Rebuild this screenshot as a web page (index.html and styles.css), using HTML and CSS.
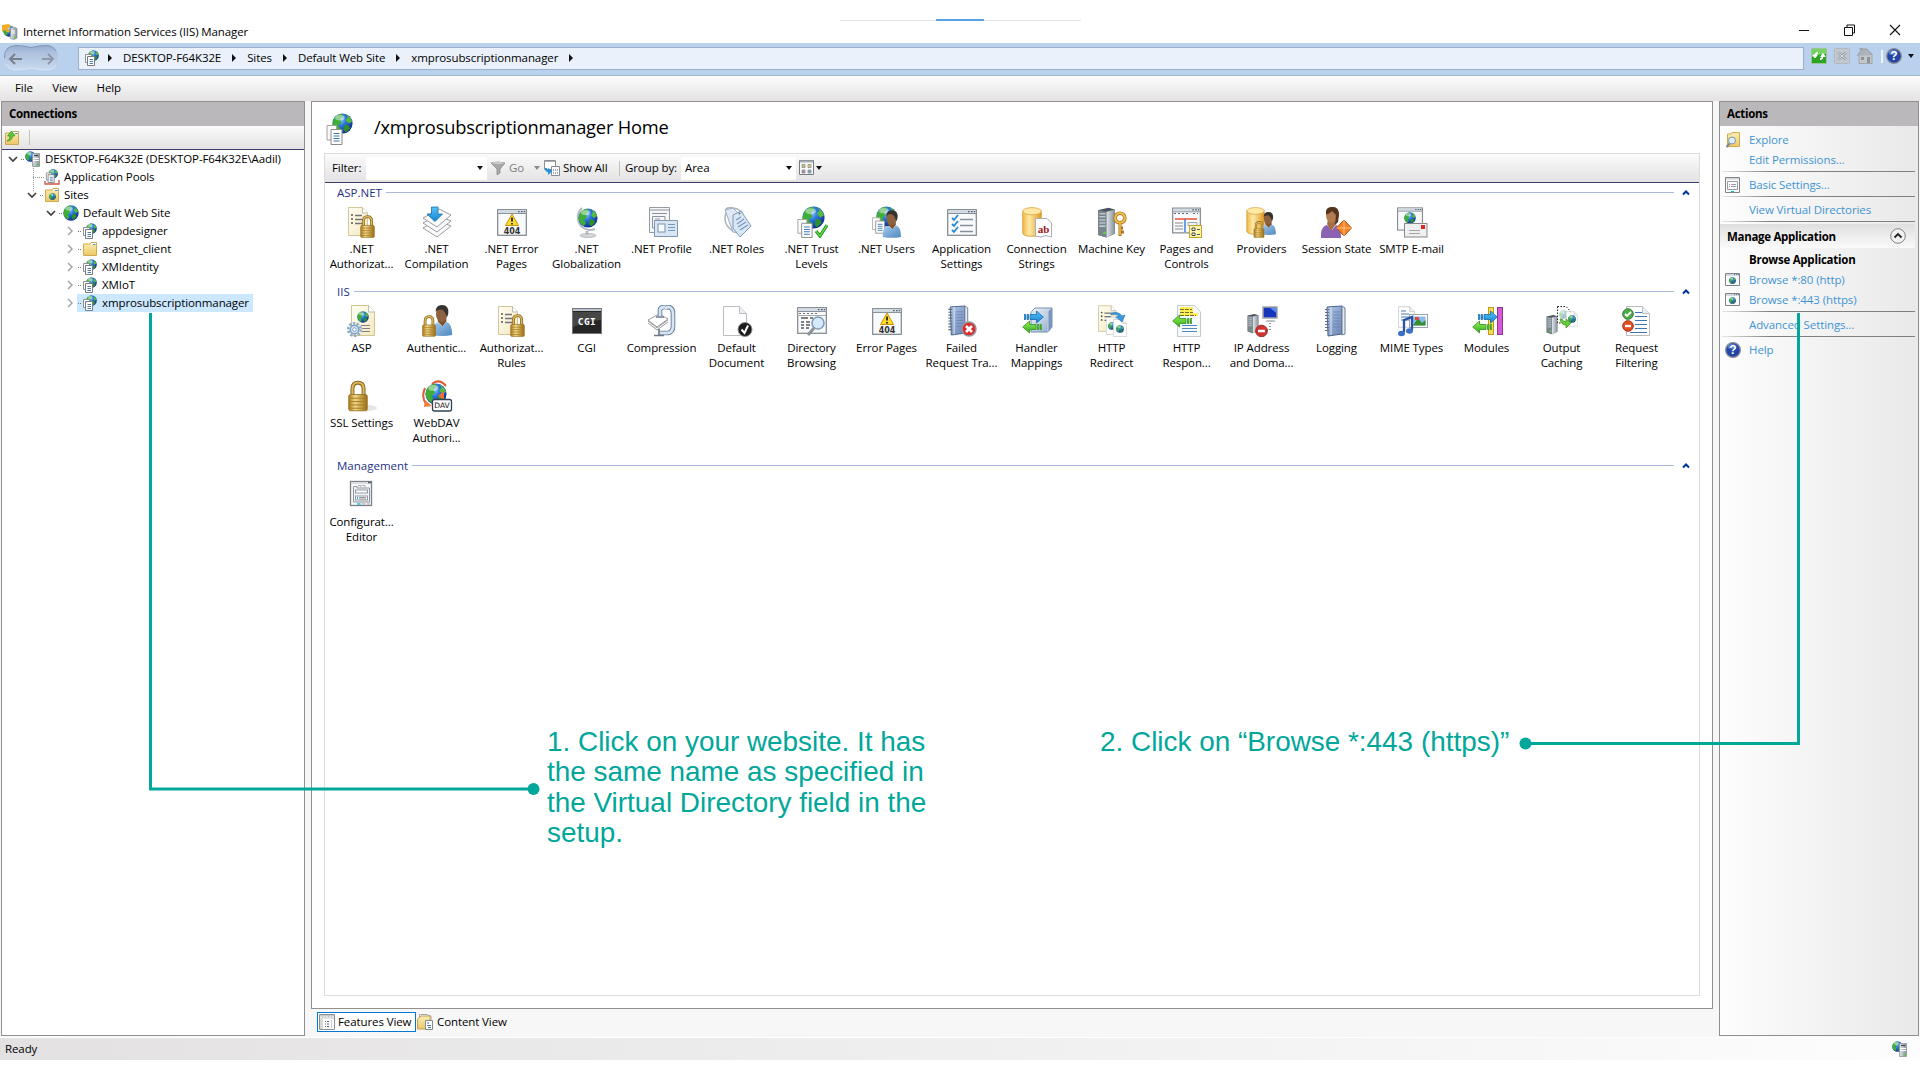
FILE: index.html
```html
<!DOCTYPE html>
<html lang="en">
<head>
<meta charset="utf-8">
<title>Internet Information Services (IIS) Manager</title>
<link rel="stylesheet" href="styles.css">
</head>
<body>
<svg class="sprite" width="0" height="0" aria-hidden="true">
<defs>
<radialGradient id="gBlue" cx=".38" cy=".3" r=".75"><stop offset="0" stop-color="#9fd4ff"/><stop offset=".4" stop-color="#2c78dc"/><stop offset="1" stop-color="#0b2a86"/></radialGradient>
<linearGradient id="gGold" x1="0" x2="1" y1="0" y2="0"><stop offset="0" stop-color="#a97a1d"/><stop offset=".35" stop-color="#f3d98a"/><stop offset="1" stop-color="#9a6c12"/></linearGradient>
<linearGradient id="gDb" x1="0" x2="1" y1="0" y2="0"><stop offset="0" stop-color="#f2b544"/><stop offset=".35" stop-color="#ffeaa8"/><stop offset="1" stop-color="#e09a20"/></linearGradient>
<linearGradient id="gFolder" x1="0" x2="0" y1="0" y2="1"><stop offset="0" stop-color="#fdeeb6"/><stop offset="1" stop-color="#ecc765"/></linearGradient>
<linearGradient id="gServer" x1="0" x2="1" y1="0" y2="0"><stop offset="0" stop-color="#e2e6ea"/><stop offset="1" stop-color="#85909a"/></linearGradient>
<linearGradient id="gPage" x1="0" x2="1" y1="0" y2="1"><stop offset="0" stop-color="#fffef4"/><stop offset="1" stop-color="#f3e8bd"/></linearGradient>
<linearGradient id="gShirt" x1="0" x2="1" y1="0" y2="1"><stop offset="0" stop-color="#a6cdf0"/><stop offset="1" stop-color="#4f88bd"/></linearGradient>
<linearGradient id="gBook" x1="0" x2="1" y1="0" y2="1"><stop offset="0" stop-color="#b3c8e8"/><stop offset="1" stop-color="#6884b4"/></linearGradient>
<linearGradient id="gSky" x1="0" x2="0" y1="0" y2="1"><stop offset="0" stop-color="#57c4f8"/><stop offset="1" stop-color="#1583d4"/></linearGradient>
<linearGradient id="gLime" x1="0" x2="0" y1="0" y2="1"><stop offset="0" stop-color="#9cf05c"/><stop offset="1" stop-color="#2fae1c"/></linearGradient>
<linearGradient id="gSteel" x1="0" x2="1" y1="0" y2="1"><stop offset="0" stop-color="#f4f9fe"/><stop offset="1" stop-color="#8fa9c8"/></linearGradient>
</defs>

<symbol id="globe" viewBox="0 0 20 20"><circle cx="10" cy="10" r="9.6" fill="url(#gBlue)"/><path d="M2 5Q5 1 9 .7L11 3 8 6 9 9 6 12 8 15 6 18Q1 15 .5 10Z" fill="#3fae35"/><path d="M13 1.2Q18 4 19.2 8L16 10 13 7 15 4Z" fill="#55bb3e"/><path d="M12 11 16 12 17 15 13 18.5 11 16Z" fill="#2f8f2c"/><ellipse cx="7.5" cy="4.5" rx="4.5" ry="2.6" fill="#fff" opacity=".45"/></symbol>
<symbol id="pages" viewBox="0 0 16 20"><path d="M.5.5H10V15H.5Z" fill="#fafafa" stroke="#a6a29b"/><path d="M4.500 4.500H15.500V19.500H4.500Z" fill="#fff" stroke="#8d8a85"/><path d="M7 8.500H13M7 11H13M7 13.500H13M7 16H13" stroke="#3b74b9" stroke-width="1.100"/></symbol>
<symbol id="sheet" viewBox="0 0 24 30"><path d="M.5.5H16.500L23.500 7.500V29.500H.5Z" fill="#fff" stroke="#b9bdc2"/><path d="M16.500.5V7.500H23.500" fill="#eceff3" stroke="#b9bdc2"/></symbol>
<symbol id="cream" viewBox="0 0 24 30"><path d="M.5.5H14.500L19.500 6V28.500H.5Z" fill="url(#gPage)" stroke="#d2c79c"/><path d="M14.500.5V6H19.500" fill="#fff" stroke="#bbb"/><g fill="#555"><circle cx="4" cy="8" r="1"/><circle cx="4" cy="12" r="1"/><circle cx="4" cy="16" r="1"/></g><path d="M7 8.500H14M7 12.500H14M7 16.500H14" stroke="#77727a" stroke-width="1.300"/></symbol>
<symbol id="lock" viewBox="0 0 18 28"><path d="M4 14V7.500Q4 2 9 2T14 7.500V14" fill="none" stroke="#8b681c" stroke-width="3.600"/><path d="M4 14V7.500Q4 2 9 2T14 7.500V14" fill="none" stroke="#dcbc62" stroke-width="1.700"/><rect x=".7" y="12.700" width="16.600" height="14.600" rx="1.500" fill="url(#gGold)" stroke="#99701e" stroke-width=".8"/><path d="M1.500 16H16.500M1.500 19H16.500M1.500 22H16.500M1.500 25H16.500" stroke="#a87d25" stroke-width=".9"/></symbol>
<symbol id="window" viewBox="0 0 30 27"><rect x=".7" y=".7" width="28.600" height="25.600" fill="#f8fafb" stroke="#7e858c" stroke-width="1.200"/><path d="M1.300 1.300H28.700V4H1.300Z" fill="#d4dae1"/><path d="M1 4.500H29" stroke="#8a929b"/><path d="M21 2.600H22.600M24 2.600H25.600M26.800 2.600H28.200" stroke="#4c5d75" stroke-width="1.300"/></symbol>
<symbol id="man" viewBox="0 0 22 32"><path d="M1 31Q0 20 7 18L12 22 16 17.500Q22 19 22 31Q12 33 1 31Z" fill="url(#gShirt)"/><path d="M7 17 12 22 16 17V13H8Z" fill="#7b5130"/><ellipse cx="11" cy="9.500" rx="5.700" ry="8" fill="#8d6240"/><path d="M5 7Q5 0 11.500 0 19 0 18 9L16.500 13Q15 7 12 5 8 3.500 5 7Z" fill="#35322f"/></symbol>
<symbol id="woman" viewBox="0 0 22 32"><path d="M0 32Q-1 21 6 19L11 24 15 19Q20 20 20 32Z" fill="#8c63b4"/><path d="M6 18 10 25 15 18V14H7Z" fill="#a36d45"/><ellipse cx="10.500" cy="9" rx="5.500" ry="8" fill="#b17c52"/><path d="M5 8Q4 1 11 1 18 0 18 9L17 16 14 19 15 9 11 5Q8 9 5 8Z" fill="#55331c"/></symbol>
<symbol id="db" viewBox="0 0 20 30"><path d="M.7 4V26Q1 29.300 10 29.300T19.300 26V4Z" fill="url(#gDb)" stroke="#d49a32" stroke-width=".8"/><ellipse cx="10" cy="4.200" rx="9.300" ry="3.600" fill="#ffe9a4" stroke="#d9a443" stroke-width=".8"/></symbol>
<symbol id="tower" viewBox="0 0 18 30"><path d="M1 3 11 .8 17 2.500V26L9 29.500 1 27Z" fill="#4c555d"/><path d="M1 3 9 4.500V29.500L1 27Z" fill="#79848d"/><path d="M9 4.500 17 2.500V26L9 29.500Z" fill="url(#gServer)"/><path d="M2 6.500H8M2 9.500H8M2 12.500H8M2 15.500H8M2 18.500H8" stroke="#dbe2e7"/><circle cx="7" cy="25" r="1.200" fill="#5bdd31"/></symbol>
<symbol id="book" viewBox="0 0 24 32"><path d="M3 2 18 1V29L4 31Z" fill="url(#gBook)" stroke="#4c628b"/><path d="M18 1 21 3V29L18 30Z" fill="#e4eaf4" stroke="#6d7c98"/><path d="M7 2V30" stroke="#dbe5f5"/><path d="M9 7H16M9 10H16M9 13H16M9 16H16M9 19H16M9 22H16" stroke="#5c76a6" stroke-width=".6"/><path d="M1 4.500H5M1 7.500H5M1 10.500H5M1 13.500H5M1 16.500H5M1 19.500H5M1 22.500H5M1 25.500H5" stroke="#676f7e" stroke-width="1.200"/></symbol>
<symbol id="right" viewBox="0 0 20 14"><path d="M0 4.500H1.500V9.500H0ZM3 4.500H4.500V9.500H3ZM6 4.500H12.500V1L19.300 7 12.500 13V9.500H6Z" fill="url(#gSky)" stroke="#1769ab" stroke-width=".8"/></symbol>
<symbol id="left" viewBox="0 0 20 14"><path d="M20 4.500H18.500V9.500H20ZM17 4.500H15.500V9.500H17ZM14 4.500H7.500V1L.7 7 7.500 13V9.500H14Z" fill="url(#gLime)" stroke="#31901d" stroke-width=".8"/></symbol>

<symbol id="f-auth" viewBox="0 0 32 32"><use href="#cream" x="2" y="1" width="24" height="30"/><use href="#lock" x="14" y="9" width="15" height="23"/></symbol>
<symbol id="f-compile" viewBox="0 0 32 32"><g fill="#fbfbfc" stroke="#8e9196" stroke-width=".9"><path d="M2 22 16 14 30 20 16 31Z"/><path d="M2 17 16 9 30 15 16 26Z"/><path d="M2 12 18 3 30 9 16 21Z"/></g><path d="M10.500 1H17V8H21.500L14 15.500 6 8H10.500Z" fill="url(#gSky)" stroke="#176cab" stroke-width=".8"/></symbol>
<symbol id="f-404" viewBox="0 0 32 32"><use href="#window" x="1" y="3" width="30" height="27"/><path d="M16 8 22.500 19.500H9.500Z" fill="#ffda27" stroke="#c89709" stroke-linejoin="round"/><path d="M16 11.500V15.500M16 17V18.500" stroke="#222" stroke-width="1.800"/></symbol>
<symbol id="f-globe" viewBox="0 0 32 32"><ellipse cx="17" cy="29.500" rx="8" ry="2" fill="#d4d7da" stroke="#a9adb0" stroke-width=".7"/><path d="M16 25V29" stroke="#b9bcc0" stroke-width="3"/><path d="M11 2A12.500 12.500 0 0 0 24 23" fill="none" stroke="#b4b9bf" stroke-width="2"/><use href="#globe" x="7" y="2" width="20" height="20"/></symbol>
<symbol id="f-profile" viewBox="0 0 32 32"><path d="M3.500 1.500H23.500V26.500H3.500Z" fill="#f5f6f8" stroke="#949ba3"/><path d="M3.500 4H23.500M6 7.500H21M6.500 10.500H19V22H6.500ZM9 13H14" fill="none" stroke="#8b929b"/><path d="M8.500 14.500H31.500V30.500H8.500Z" fill="#d8e5f3" stroke="#8097b3"/><rect x="12" y="18" width="7" height="8" fill="#f7fbff" stroke="#7793b3"/><path d="M22 18.500H29M22 21.500H29M22 24.500H29" stroke="#7696bd"/></symbol>
<symbol id="f-roles" viewBox="0 0 32 32"><path d="M7 7Q1 1 12 2 20 3 22 9M6 4Q0 18 12 25" fill="none" stroke="#aeb2b7" stroke-width="1.500"/><path d="M4 4 12 2 20 10 18 27 12 26Z" fill="#dfe9f4" stroke="#9aaec5"/><path d="M12 9 20 5 30 20 19 31 12 22Z" fill="#d9e6f4" stroke="#7c99bb"/><path d="M15 14 20 11M16 18 23 13M17 21 25 16M19 24 27 19" stroke="#7795bb" stroke-width="1.100"/><circle cx="18.500" cy="7.500" r="1" fill="#65788d"/></symbol>
<symbol id="f-trust" viewBox="0 0 32 32"><use href="#globe" x="6" y="0" width="23" height="23"/><use href="#pages" x="1" y="13" width="16" height="19"/><path d="M20 25 24 30 31 19" fill="none" stroke="#229a20" stroke-width="3.200"/><path d="M20 25 24 30 31 19" fill="none" stroke="#73dd50" stroke-width="1.200"/></symbol>
<symbol id="f-users" viewBox="0 0 32 32"><use href="#globe" x="5" y="0" width="21" height="21"/><use href="#pages" x="1" y="11" width="13" height="17"/><use href="#man" x="11" y="4" width="19" height="28"/></symbol>
<symbol id="f-settings" viewBox="0 0 32 32"><use href="#window" x="1" y="3" width="30" height="27"/><path d="M6 12 8 14 12 9M6 18 8 20 12 15M6 24 8 26 12 21" fill="none" stroke="#2989ce" stroke-width="1.800"/><path d="M14 13.500H27M14 19.500H27M14 25.500H27" stroke="#86909a" stroke-width="1.300"/></symbol>
<symbol id="f-conn" viewBox="0 0 32 32"><use href="#db" x="1" y="1" width="20" height="30"/><path d="M14.500 12.500H26L30.500 17V31L25 29.500 20 31 14.500 30Z" fill="#fff" stroke="#aaadb1"/></symbol>
<symbol id="f-key" viewBox="0 0 32 32"><use href="#tower" x="1" y="1" width="19" height="31"/><circle cx="24" cy="12" r="4.800" fill="none" stroke="#a06f17" stroke-width="3.600"/><circle cx="24" cy="12" r="4.800" fill="none" stroke="#f3bd4d" stroke-width="2.200"/><path d="M24 17V30M24 26H28M24 22H27" stroke="#ac7418" stroke-width="3"/><path d="M24 17V29" stroke="#f3bd4d" stroke-width="1.500"/></symbol>
<symbol id="f-pages" viewBox="0 0 32 32"><use href="#window" x="1" y="1" width="29" height="27"/><path d="M3 7.500H18M22 7.500H27" stroke="#5e6670" stroke-dasharray="2 2"/><path d="M4 13H26" stroke="#f05a40" stroke-width="1.600"/><path d="M14 13V26" stroke="#3474e4" stroke-width="1.400"/><path d="M4 17H12M4 20H12M4 23H12" stroke="#848c95"/><path d="M17 16.500H26V19.500H17Z" fill="#eef3f7" stroke="#9aa"/><rect x="18.500" y="19.500" width="12" height="12" fill="#fff6ab" stroke="#c4a52a"/><path d="M21 22H24V24.500H21ZM21 27H24V29.500H21Z" fill="#fff" stroke="#484848"/><path d="M26 23.500H29M26 28.500H29" stroke="#555"/></symbol>
<symbol id="f-providers" viewBox="0 0 32 32"><use href="#db" x="0" y="1" width="19" height="28"/><use href="#man" x="14" y="6" width="16" height="23"/><use href="#lock" x="7" y="15" width="12" height="17"/></symbol>
<symbol id="f-session" viewBox="0 0 32 32"><use href="#woman" x="0" y="0" width="22" height="32"/><path d="M23 14 30.500 22 23 30 15.500 22Z" fill="#f68427" stroke="#b34e0b"/><path d="M23 14V30M15.500 22H30.500" stroke="#ffc083"/></symbol>
<symbol id="f-smtp" viewBox="0 0 32 32"><use href="#window" x="1" y="1" width="26" height="24"/><use href="#globe" x="8" y="6" width="12" height="12"/><rect x="8.500" y="17.500" width="22.500" height="13.500" fill="#f0f0f1" stroke="#87898c"/><rect x="25" y="19" width="4" height="4" fill="#df2622"/><path d="M13 24.500H24M13 27.500H24" stroke="#a1a3a6" stroke-width="1.200"/></symbol>
<symbol id="f-asp" viewBox="0 0 32 32"><path d="M5.500.5H22.500L28.500 7V30.500H5.500Z" fill="url(#gPage)" stroke="#d1c592"/><path d="M22.500.5V7H28.500" fill="#fff" stroke="#bbb"/><use href="#globe" x="11" y="6" width="12" height="12"/><path d="M15 20.500H24M16 23.500H24M16 26.500H24" stroke="#858189" stroke-width="1.200"/><circle cx="8.500" cy="24.500" r="6.300" fill="none" stroke="#8eaccc" stroke-width="2.500" stroke-dasharray="2.400 1.500"/><circle cx="8.500" cy="24.500" r="4.300" fill="#d9e8f7" stroke="#7c9ec3" stroke-width="1.600"/><circle cx="8.500" cy="24.500" r="1.800" fill="#fff" stroke="#7c9ec3"/></symbol>
<symbol id="f-authn" viewBox="0 0 32 32"><use href="#man" x="9" y="0" width="23" height="31"/><use href="#lock" x="1" y="10" width="14" height="22"/></symbol>
<symbol id="f-cgi" viewBox="0 0 32 32"><rect x="1.500" y="3.500" width="29" height="25" fill="#252525" stroke="#74787d"/><path d="M2 4H30V6H2Z" fill="#bac2cc"/><path d="M2 7H30V15Q15 16 2 22Z" fill="#464646"/></symbol>
<symbol id="f-compress" viewBox="0 0 32 32"><path d="M19 4Q20 2 23 2 27 3 27 9V21Q27 27 22 28H14" fill="none" stroke="#5e7898" stroke-width="4.600"/><path d="M19 4Q20 2 23 2 27 3 27 9V21Q27 27 22 28H14" fill="none" stroke="#d7e4f2" stroke-width="2.800"/><path d="M2 15 13 9 22 14 11 22Z" fill="#fff" stroke="#9a9da1"/><path d="M2 18 11 25 22 17M2 16 11 23 22 15" fill="none" stroke="#9a9da1"/><path d="M14 11V5Q14 2 19 2" fill="none" stroke="#5e7898" stroke-width="4.600"/><path d="M14 11V5Q14 2 19 2" fill="none" stroke="#d7e4f2" stroke-width="2.800"/><path d="M10 12H18M13 24V31M8 30.500H18" stroke="#6c7886" stroke-width="1.700"/></symbol>
<symbol id="f-default" viewBox="0 0 32 32"><use href="#sheet" x="2" y="1" width="24" height="30"/><circle cx="24" cy="24.500" r="7" fill="#1d1d1d" stroke="#8d8f91"/><path d="M20.500 24.500 23.500 28 27 20.500" fill="none" stroke="#fff" stroke-width="2"/></symbol>
<symbol id="f-browse" viewBox="0 0 32 32"><use href="#window" x="1" y="2" width="30" height="27"/><path d="M3 8.500H21" stroke="#777" stroke-dasharray="2 2"/><path d="M1 10.500H30" stroke="#aaa"/><path d="M5 13H12M14 13H17M5 17H8M10 17H14M5 20H8M10 20H14M5 23H8M10 23H13" stroke="#555b62" stroke-width="1.400"/><path d="M18 23 12 30" stroke="#8c9299" stroke-width="3"/><circle cx="22" cy="18" r="6" fill="#d6eafe" stroke="#859cb5" stroke-width="1.600"/></symbol>
<symbol id="f-failed" viewBox="0 0 32 32"><use href="#book" x="1" y="0" width="24" height="31"/><circle cx="23" cy="24" r="7" fill="#d92a2d" stroke="#969696" stroke-width="1.500"/><path d="M20 21 26 27M26 21 20 27" stroke="#fff" stroke-width="2.700"/></symbol>
<symbol id="f-handler" viewBox="0 0 32 32"><path d="M10 7 14 3H31V22L27 27H10Z" fill="url(#gSteel)" stroke="#7791b0"/><path d="M27 7 31 3V22L27 27Z" fill="#7896bc"/><path d="M10 7H27V27" fill="none" stroke="#bed0e5"/><use href="#right" x="3" y="5" width="20" height="14"/><use href="#left" x="1" y="15" width="20" height="14"/></symbol>
<symbol id="f-redirect" viewBox="0 0 32 32"><use href="#cream" x="2" y="0" width="22" height="28"/><use href="#sheet" x="10" y="12" width="14" height="18"/><use href="#globe" x="12" y="17" width="8" height="8"/><use href="#sheet" x="17" y="14" width="14" height="18"/><use href="#globe" x="20" y="20" width="8" height="8"/><path d="M15 8Q23 6 26 11L29 10 26 17 20 12 23 11Q20 8 15 10Z" fill="#3b98df" stroke="#2073b2" stroke-width=".6"/></symbol>
<symbol id="f-response" viewBox="0 0 32 32"><path d="M6.500.5H23.500L29.500 7V31.500H6.500Z" fill="#f7fafc" stroke="#c3cbd0"/><path d="M9 3.500H22M9 6.500H22M9 9.500H27" stroke="#ffee51" stroke-width="3"/><path d="M9 4.500H21M9 7.500H22M9 10.500H25" stroke="#726d2f" stroke-dasharray="4 1"/><path d="M11 20.500H26M11 23.500H26M11 26.500H26" stroke="#4e87c2"/><use href="#left" x="1" y="9" width="20" height="14"/></symbol>
<symbol id="f-ip" viewBox="0 0 32 32"><use href="#tower" x="1" y="8" width="12" height="21"/><rect x="17" y="2" width="14" height="11" fill="#1536bb" stroke="#a6a8aa" stroke-width="1.500"/><path d="M24 3H30.500V8Z" fill="#5e89ef"/><path d="M21 15H28L30 17H19Z" fill="#bfc2c5"/><path d="M24 18V25H19" fill="none" stroke="#222" stroke-dasharray="1 2"/><circle cx="15.500" cy="26" r="5.800" fill="#cf3431" stroke="#9b2321"/><path d="M12 26H19" stroke="#fff" stroke-width="2.500"/></symbol>
<symbol id="f-logging" viewBox="0 0 32 32"><use href="#book" x="3" y="0" width="24" height="32"/></symbol>
<symbol id="f-mime" viewBox="0 0 32 32"><use href="#sheet" x="2" y="0" width="17" height="24"/><path d="M5 6H10M5 9H13M5 12H13M5 15H13" stroke="#427db7"/><rect x="13.500" y="9.500" width="18" height="13" fill="#fff" stroke="#9aa0a7"/><rect x="16" y="11.500" width="13.500" height="9" fill="#8bb9ef"/><path d="M17 20.500 22 13 26 18 29.500 15V20.500Z" fill="#358f2d"/><path d="M19 12H23V15H19Z" fill="#da4a36"/><path d="M8 27V15L16 12V25" fill="none" stroke="#2852a2" stroke-width="2.300"/><ellipse cx="5.500" cy="28.500" rx="3.500" ry="2.700" fill="#3d6fc4"/><ellipse cx="13.500" cy="26" rx="3.500" ry="2.700" fill="#3d6fc4"/></symbol>
<symbol id="f-modules" viewBox="0 0 32 32"><rect x="17.500" y="2.500" width="5" height="27" fill="#f3dc58" stroke="#bd9b1d"/><rect x="26.500" y="2.500" width="5" height="27" fill="#d65ad4" stroke="#913590"/><use href="#right" x="7" y="5" width="20" height="14"/><use href="#left" x="1" y="15" width="20" height="14"/></symbol>
<symbol id="f-output" viewBox="0 0 32 32"><use href="#tower" x="0" y="8" width="12" height="23"/><path d="M11.500 1.500H20L24 6V18H11.500Z" fill="#fff" stroke="#222" stroke-dasharray="1.500 1.500"/><use href="#globe" x="13" y="5" width="9" height="9" opacity=".4"/><use href="#sheet" x="20" y="6" width="12" height="16"/><use href="#globe" x="22" y="10" width="8" height="8"/><path d="M14 14Q15 20 20 20V23L25 18 20 14V17Q17 17 16 14Z" fill="#65cf37" stroke="#318b19" stroke-width=".7"/></symbol>
<symbol id="f-filter" viewBox="0 0 32 32"><use href="#sheet" x="5" y="1" width="24" height="30"/><path d="M14 7.500H21M14 11.500H26M14 15.500H26M14 19.500H26M14 23.500H26M9 27.500H26" stroke="#3c74b5" stroke-width="1.100"/><circle cx="7" cy="9" r="5.300" fill="#4fac49" stroke="#347d32"/><path d="M4 9 6 11 10 7" fill="none" stroke="#fff" stroke-width="1.800"/><circle cx="7" cy="21" r="5.300" fill="#e1501e" stroke="#a83313"/><path d="M4 21H10" stroke="#fff" stroke-width="2.300"/></symbol>
<symbol id="f-ssl" viewBox="0 0 32 32"><ellipse cx="22" cy="28" rx="9" ry="3" fill="#e6e6e6"/><use href="#lock" x="2" y="0" width="20" height="32"/></symbol>
<symbol id="f-dav" viewBox="0 0 32 32"><use href="#globe" x="4" y="3" width="22" height="22"/><path d="M11 4Q18-2 25 6M4 8Q0 17 5 24" fill="none" stroke="#de5a3a" stroke-width="2"/><path d="M3 27 4 20 11 26Z" fill="#ee7f3d"/><path d="M17 16 23 11V20Z" fill="#ee6f35"/><rect x="11.500" y="19.500" width="19" height="11.500" rx="2" fill="#fff" stroke="#2e4357" stroke-width="1.300"/></symbol>
<symbol id="f-config" viewBox="0 0 32 32"><g transform="translate(-1 0)"><rect x="5.500" y="2.500" width="21" height="24" fill="#f8f8f9" stroke="#7c8187" stroke-width="1.300"/><path d="M6 3H26V5H6Z" fill="#dadee3"/><path d="M23 3.500H26" stroke="#566" stroke-width="1.500"/><path d="M8.500 23V7.500H12V9H24.500V23Z" fill="#f3f5f8" stroke="#8e949e"/><path d="M13 6.500H16V8M17 6.500H20V8" fill="none" stroke="#aaaebc"/><rect x="10.500" y="11" width="12" height="3" fill="#fff" stroke="#939aa6"/><rect x="10.500" y="17" width="12" height="4" fill="#fff" stroke="#939aa6"/><path d="M12 19H13" stroke="#00b7f1" stroke-width="2"/><path d="M14 18.500H21M14 20H21" stroke="#999"/><path d="M12 25H15.500" stroke="#10c3f8" stroke-width="1.500"/><path d="M16.500 25H20.500M22 25H25" stroke="#babdc2" stroke-width="1.500"/></g></symbol>

<symbol id="s-server" viewBox="0 0 16 16"><use href="#globe" x="0" y="0" width="11" height="11"/><path d="M7.500 2.500H14.500V15.500H7.500Z" fill="url(#gServer)" stroke="#8a939b" stroke-width=".8"/><path d="M9 4.500H13" stroke="#39424a"/><path d="M8 7.500H14M8 9.500H14" stroke="#fff"/><rect x="11.500" y="13" width="2" height="1.500" fill="#4ad41e"/></symbol>
<symbol id="s-iis" viewBox="0 0 16 16"><use href="#globe" x="1" y="1" width="12" height="12"/><path d="M0 8V1L7 0 9 3 5 4 8 7 6 9 3 6Z" fill="#f4ac27"/><path d="M8.500 4 12 3 15 4.500V14L12 15.500 8.500 14.500Z" fill="url(#gServer)" stroke="#838d96" stroke-width=".7"/><path d="M9.500 7H13M9.500 9H13" stroke="#fff"/><circle cx="13" cy="13.500" r="1" fill="#58ca2c"/></symbol>
<symbol id="s-app" viewBox="0 0 16 16"><use href="#globe" x="4" y="0" width="11" height="11"/><path d="M1.500 4.500H7.500V12.500H1.500Z" fill="#fff" stroke="#8d9095"/><path d="M3.500 6.500H10.500V15.500H3.500Z" fill="#fff" stroke="#777c83"/><path d="M5.500 9.500H9M5.500 11.500H9M5.500 13.500H9" stroke="#517eb2"/></symbol>
<symbol id="s-pools" viewBox="0 0 16 16"><path d="M1 12V15H15V11" fill="none" stroke="#cf5646" stroke-width="1.300"/><use href="#s-app" x="1" y="0" width="14" height="14"/></symbol>
<symbol id="s-folder" viewBox="0 0 16 16"><path d="M1.500 3H8L9 1.500H14.500V14.500H1.500Z" fill="url(#gFolder)" stroke="#cfa953"/><path d="M9 2.500H14" stroke="#fff"/><path d="M11 3.500H13.500" stroke="#3d98dc"/></symbol>
<symbol id="s-sites" viewBox="0 0 16 16"><use href="#s-folder" width="16" height="16"/><use href="#globe" x="5" y="6" width="7" height="7"/></symbol>
<symbol id="s-up" viewBox="0 0 16 16"><use href="#s-folder" width="16" height="16"/><path d="M3 11Q6 10 6 6H3.500L7.500 1 11 6H8.500Q8 11 3 11Z" fill="#5dca39" stroke="#35911c" stroke-width=".7"/></symbol>
<symbol id="s-explore" viewBox="0 0 16 16"><path d="M2.500 2H6L7 .5H14.500V14.500H2.500Z" fill="url(#gFolder)" stroke="#cfa953"/><path d="M4.500 11.500 1.500 15" stroke="#7e858d" stroke-width="2"/><circle cx="7" cy="8.500" r="3.500" fill="#dceffd" stroke="#8197ac"/></symbol>
<symbol id="s-basic" viewBox="0 0 16 16"><path d="M.5.5H14.500V15.500H.5Z" fill="#fbfbfb" stroke="#7e8388"/><path d="M1 1H14V2.500H1Z" fill="#d0d4d8"/><path d="M2.500 4.500H12.500V12.500H2.500ZM6 7.500H11M6 9.500H11M4 7.500H5M4 9.500H5" fill="none" stroke="#999ea6"/><path d="M6 14.500H9" stroke="#00b7f1"/></symbol>
<symbol id="s-web" viewBox="0 0 16 16"><path d="M.5 1.500H14.500V13.500H.5Z" fill="#fafafa" stroke="#7e8389"/><path d="M1 2H14V4H1Z" fill="#d1d9e1"/><path d="M9 2.500H14" stroke="#647388" stroke-dasharray="1 1"/><use href="#globe" x="4" y="5" width="7" height="7"/></symbol>
<symbol id="s-help" viewBox="0 0 16 16"><circle cx="8" cy="8" r="7.400" fill="#2347a6" stroke="#8e929b" stroke-width="1.200"/><ellipse cx="7" cy="4.500" rx="4.500" ry="2.500" fill="#8ba9e5" opacity=".55"/></symbol>
<symbol id="s-refresh" viewBox="0 0 16 16"><rect x=".5" y=".5" width="15" height="15" rx="1" fill="#2da326" stroke="#9ac695"/><path d="M1 1H15V6Q8 6 1 9Z" fill="#79d165"/><path d="M7 4.500Q4 4.500 4 8M1.800 7H6.200L4 10ZM9 11.500Q12 11.500 12 8M9.800 8.500H14.200L12 5.500Z" fill="#fff" stroke="#fff"/><path d="M7 5Q4.500 5 4.500 8M9 11Q11.500 11 11.500 8" fill="none" stroke="#fff" stroke-width="1.500"/></symbol>
<symbol id="s-stop" viewBox="0 0 16 16"><rect x=".5" y=".5" width="15" height="15" rx="1" fill="#c2c8ce" stroke="#b0b9c3"/><path d="M4 4.500 12 11.500M12 4.500 4 11.500" stroke="#929ba5" stroke-width="2.500"/><path d="M4 4.500 12 11.500M12 4.500 4 11.500" stroke="#e0e4e8"/></symbol>
<symbol id="s-home" viewBox="0 0 16 16"><path d="M2 8V15.500H15V7L9 1Z" fill="#c4c8cc" stroke="#a1a7ad"/><path d="M0 8 5 1H10L15.500 7M3 2V0H5V2" fill="#adb3b9" stroke="#989fa6"/><path d="M10 9H13V15H10ZM4 9H7V12H4Z" fill="#909396"/></symbol>
<symbol id="s-funnel" viewBox="0 0 16 16"><path d="M1 3Q8 1 15 3L10 9V13L7 15V9Z" fill="#a7a7a7" stroke="#8d8d8d" stroke-width=".8"/><ellipse cx="8" cy="3" rx="6" ry="1.200" fill="#c9c9c9"/></symbol>
<symbol id="s-showall" viewBox="0 0 16 16"><path d="M.5.5H11.500V9.500H.5Z" fill="#fff" stroke="#8b9097"/><path d="M1 1.500H11" stroke="#a8aeb6"/><path d="M7.500 6.500H15.500V15.500H7.500Z" fill="#fafafa" stroke="#868c94"/><path d="M9 10H14M9 13H14" stroke="#59616d" stroke-dasharray="1 1"/><path d="M1 8Q1 12 4 12V15L8.500 11 4 8V10Q3 10 3 8Z" fill="#238edc"/></symbol>
<symbol id="s-views" viewBox="0 0 16 16"><path d="M.5.500H14.500V14.500H.5Z" fill="#f8f8f8" stroke="#757b82"/><path d="M1 1.500H14" stroke="#a9b0b8" stroke-width="2"/><g stroke="#8f8f8f" stroke-width=".8"><path d="M3 4.500H6V7.500H3Z" fill="#b4cb7c"/><path d="M9 4.500H12V7.500H9Z" fill="#e4cd66"/><path d="M3 10H6V13H3Z" fill="#bb82b6"/><path d="M9 10H12V13H9Z" fill="#74a7dd"/></g></symbol>
<symbol id="s-features" viewBox="0 0 16 16"><path d="M.5.500H15.500V15.500H.5Z" fill="#fff" stroke="#8d918f"/><path d="M1 1H15V4.500H1Z" fill="#c5c9c7"/><path d="M1 5H4V15H1Z" fill="#d6d8d3"/><path d="M1 3H15" stroke="#fff" stroke-dasharray="2 1"/><path d="M6 7.500H7M6 10H7M6 12.500H7M8 7.500H10M8 10H10M8 12.500H10" stroke="#53605c" stroke-width="1.200"/><path d="M12.500 6V14" stroke="#bdd3e8"/></symbol>
<symbol id="s-content" viewBox="0 0 16 16"><path d="M2.500.5H9L14 2V12H3Z" fill="#f2f2f2" stroke="#aaa"/><path d="M.5 5 4 2H13V12L9 15H.5Z" fill="url(#gFolder)" stroke="#c6a354"/><path d="M8.500 6.500H15.500V15.500H8.500Z" fill="#fff" stroke="#85898f"/><path d="M10 9H12M10 11.500H14M11 13.500H14" stroke="#4779ac" stroke-width="1.200"/></symbol>
<symbol id="open" viewBox="0 0 10 10"><path d="M1 3 5 7 9 3" fill="none" stroke="#404040" stroke-width="1.700"/></symbol>
<symbol id="closed" viewBox="0 0 10 10"><path d="M3 1 7 5 3 9" fill="none" stroke="#a6a6a6" stroke-width="1.500"/></symbol>
</svg>

<header class="titlebar">
  <svg class="i16"><use href="#s-iis"/></svg>
  <span class="title">Internet Information Services (IIS) Manager</span>
  <span class="handle"><i></i></span>
  <svg class="winbtns" viewBox="0 0 102 12"><path d="M0 6.500H10M45.500 3.500H53.500V11.500H45.500ZM48 3V1H55.500V9H54" fill="none" stroke="#111"/><path d="M91 1 101 11M101 1 91 11" stroke="#111" stroke-width="1.100"/></svg>
</header>

<nav class="navbar">
  <svg class="backfwd" viewBox="0 0 56 28"><defs><linearGradient id="gNav" x1="0" x2="0" y1="0" y2="1"><stop offset="0" stop-color="#96add0"/><stop offset=".3" stop-color="#adc1dc"/><stop offset="1" stop-color="#c9daf0"/></linearGradient></defs><path d="M13 1.500Q20 1.500 28 3.500 36 1.500 43 1.500 55 2 55 14 55 26 43 26 36 26 28 24 20 26 13 26 1 26 1 14 1 2 13 1.500Z" fill="url(#gNav)"/><path d="M1.500 14Q1 2 13 1.500 20 1.500 28 3.500 36 1.500 43 1.500 50 1.500 53 7" fill="none" stroke="#8197bb"/><path d="M3 20Q6 26 13 26 20 26 28 24 36 26 43 26 50 26 53 21" fill="none" stroke="#d7e4f5"/><path d="M7 15H19M12 10 7 15 12 20" fill="none" stroke="#78818c" stroke-width="2"/><path d="M39 15H50M45 10 50 15 45 20" fill="none" stroke="#8d99a9" stroke-width="2"/></svg>
  <div class="address">
    <svg class="i16"><use href="#s-app"/></svg><b class="tri"></b>
    <span>DESKTOP-F64K32E</span><b class="tri"></b>
    <span>Sites</span><b class="tri"></b>
    <span>Default Web Site</span><b class="tri"></b>
    <span>xmprosubscriptionmanager</span><b class="tri"></b>
  </div>
  <div class="navtools">
    <svg class="i16"><use href="#s-refresh"/></svg>
    <svg class="i16"><use href="#s-stop"/></svg>
    <svg class="i16"><use href="#s-home"/></svg>
    <i class="navsep"></i>
    <svg class="i16"><use href="#s-help"/><text x="8" y="12.200" text-anchor="middle" class="tq">?</text></svg>
    <b class="down"></b>
  </div>
</nav>

<div class="menubar"><span>File</span><span>View</span><span>Help</span></div>

<main class="workspace">
  <section class="connections">
    <h2>Connections</h2>
    <div class="conntools"><svg class="i16"><use href="#s-up"/></svg><i class="sep"></i></div>
    <ul class="tree">
      <li class="l0"><svg class="chev"><use href="#open"/></svg><i class="dots"></i><svg class="i16"><use href="#s-server"/></svg><span>DESKTOP-F64K32E (DESKTOP-F64K32E\Aadil)</span></li>
      <li class="l1 leaf"><i class="dots"></i><svg class="i16"><use href="#s-pools"/></svg><span>Application Pools</span></li>
      <li class="l1"><svg class="chev"><use href="#open"/></svg><i class="dots"></i><svg class="i16"><use href="#s-sites"/></svg><span>Sites</span></li>
      <li class="l2"><svg class="chev"><use href="#open"/></svg><i class="dots"></i><svg class="i16"><use href="#globe"/></svg><span>Default Web Site</span></li>
      <li class="l3"><svg class="chev"><use href="#closed"/></svg><i class="dots"></i><svg class="i16"><use href="#s-app"/></svg><span>appdesigner</span></li>
      <li class="l3"><svg class="chev"><use href="#closed"/></svg><i class="dots"></i><svg class="i16"><use href="#s-folder"/></svg><span>aspnet_client</span></li>
      <li class="l3"><svg class="chev"><use href="#closed"/></svg><i class="dots"></i><svg class="i16"><use href="#s-app"/></svg><span>XMIdentity</span></li>
      <li class="l3"><svg class="chev"><use href="#closed"/></svg><i class="dots"></i><svg class="i16"><use href="#s-app"/></svg><span>XMIoT</span></li>
      <li class="l3"><svg class="chev"><use href="#closed"/></svg><div class="selected"><i class="dots"></i><svg class="i16"><use href="#s-app"/></svg><span>xmprosubscriptionmanager</span></div></li>
    </ul>
  </section>

  <section class="center">
    <div class="home">
      <div class="hometitle"><svg class="i32"><use href="#globe" x="6" y="0" width="21" height="21"/><use href="#pages" x="0" y="12" width="17" height="20"/></svg><h1>/xmprosubscriptionmanager Home</h1></div>
      <div class="features">
        <div class="toolbar">
          <span class="w-filter">Filter:</span><span class="box filterbox"><b class="down"></b></span>
          <svg class="i16 funnel"><use href="#s-funnel"/></svg><span class="go">Go</span><b class="down pale"></b>
          <svg class="i16 showicon"><use href="#s-showall"/></svg><span class="showall">Show All</span><i class="sep"></i>
          <span class="groupby">Group by:</span><span class="box areabox"><span>Area</span><b class="down"></b></span>
          <svg class="i16 views"><use href="#s-views"/></svg><b class="down"></b>
        </div>
        <div class="group">
          <h3><span>ASP.NET</span><i></i><svg class="fold" viewBox="0 0 8 6"><path d="M1 4.500 4 1.500 7 4.500" fill="none" stroke="#003399" stroke-width="2"/></svg></h3>
          <div class="items">
            <div><svg class="i32"><use href="#f-auth"/></svg>.NET<br>Authorizat...</div>
            <div><svg class="i32"><use href="#f-compile"/></svg>.NET<br>Compilation</div>
            <div><svg class="i32"><use href="#f-404"/><text x="16" y="28" text-anchor="middle" class="t404">404</text></svg>.NET Error<br>Pages</div>
            <div><svg class="i32"><use href="#f-globe"/></svg>.NET<br>Globalization</div>
            <div><svg class="i32"><use href="#f-profile"/></svg>.NET Profile</div>
            <div><svg class="i32"><use href="#f-roles"/></svg>.NET Roles</div>
            <div><svg class="i32"><use href="#f-trust"/></svg>.NET Trust<br>Levels</div>
            <div><svg class="i32"><use href="#f-users"/></svg>.NET Users</div>
            <div><svg class="i32"><use href="#f-settings"/></svg>Application<br>Settings</div>
            <div><svg class="i32"><use href="#f-conn"/><text x="22.500" y="27" text-anchor="middle" class="tstr">ab</text></svg>Connection<br>Strings</div>
            <div><svg class="i32"><use href="#f-key"/></svg>Machine Key</div>
            <div><svg class="i32"><use href="#f-pages"/></svg>Pages and<br>Controls</div>
            <div><svg class="i32"><use href="#f-providers"/></svg>Providers</div>
            <div><svg class="i32"><use href="#f-session"/></svg>Session State</div>
            <div><svg class="i32"><use href="#f-smtp"/></svg>SMTP E-mail</div>
          </div>
        </div>
        <div class="group">
          <h3><span>IIS</span><i></i><svg class="fold" viewBox="0 0 8 6"><path d="M1 4.500 4 1.500 7 4.500" fill="none" stroke="#003399" stroke-width="2"/></svg></h3>
          <div class="items">
            <div><svg class="i32"><use href="#f-asp"/></svg>ASP</div>
            <div><svg class="i32"><use href="#f-authn"/></svg>Authentic...</div>
            <div><svg class="i32"><use href="#f-auth"/></svg>Authorizat...<br>Rules</div>
            <div><svg class="i32"><use href="#f-cgi"/><text x="16" y="20" text-anchor="middle" class="tcgi">CGI</text></svg>CGI</div>
            <div><svg class="i32"><use href="#f-compress"/></svg>Compression</div>
            <div><svg class="i32"><use href="#f-default"/></svg>Default<br>Document</div>
            <div><svg class="i32"><use href="#f-browse"/></svg>Directory<br>Browsing</div>
            <div><svg class="i32"><use href="#f-404"/><text x="16" y="28" text-anchor="middle" class="t404">404</text></svg>Error Pages</div>
            <div><svg class="i32"><use href="#f-failed"/></svg>Failed<br>Request Tra...</div>
            <div><svg class="i32"><use href="#f-handler"/></svg>Handler<br>Mappings</div>
            <div><svg class="i32"><use href="#f-redirect"/></svg>HTTP<br>Redirect</div>
            <div><svg class="i32"><use href="#f-response"/></svg>HTTP<br>Respon...</div>
            <div><svg class="i32"><use href="#f-ip"/></svg>IP Address<br>and Doma...</div>
            <div><svg class="i32"><use href="#f-logging"/></svg>Logging</div>
            <div><svg class="i32"><use href="#f-mime"/></svg>MIME Types</div>
            <div><svg class="i32"><use href="#f-modules"/></svg>Modules</div>
            <div><svg class="i32"><use href="#f-output"/></svg>Output<br>Caching</div>
            <div><svg class="i32"><use href="#f-filter"/></svg>Request<br>Filtering</div>
            <div><svg class="i32"><use href="#f-ssl"/></svg>SSL Settings</div>
            <div><svg class="i32"><use href="#f-dav"/><text x="21" y="28.300" text-anchor="middle" class="tdav">DAV</text></svg>WebDAV<br>Authori...</div>
          </div>
        </div>
        <div class="group">
          <h3><span>Management</span><i></i><svg class="fold" viewBox="0 0 8 6"><path d="M1 4.500 4 1.500 7 4.500" fill="none" stroke="#003399" stroke-width="2"/></svg></h3>
          <div class="items">
            <div><svg class="i32"><use href="#f-config"/></svg>Configurat...<br>Editor</div>
          </div>
        </div>
      </div>
    </div>
    <div class="tabs">
      <div class="tab active"><svg class="i16"><use href="#s-features"/></svg><span>Features View</span></div>
      <div class="tab"><svg class="i16"><use href="#s-content"/></svg><span>Content View</span></div>
    </div>
  </section>

  <section class="actions">
    <h2>Actions</h2>
    <div class="actlist">
      <a><svg class="i16"><use href="#s-explore"/></svg>Explore</a>
      <a><i class="i16"></i>Edit Permissions...</a>
      <hr>
      <a><svg class="i16"><use href="#s-basic"/></svg>Basic Settings...</a>
      <hr>
      <a><i class="i16"></i>View Virtual Directories</a>
      <hr class="short">
      <div class="manage"><span>Manage Application</span><svg viewBox="0 0 16 16"><circle cx="8" cy="8" r="7.300" fill="#f1f1f1" stroke="#838383"/><path d="M4.500 9.500 8 6 11.500 9.500" fill="none" stroke="#222" stroke-width="1.800"/></svg></div>
      <a class="strong"><i class="i16"></i>Browse Application</a>
      <a><svg class="i16"><use href="#s-web"/></svg>Browse *:80 (http)</a>
      <a><svg class="i16"><use href="#s-web"/></svg>Browse *:443 (https)</a>
      <hr>
      <a><i class="i16"></i>Advanced Settings...</a>
      <hr>
      <a><svg class="i16"><use href="#s-help"/><text x="8" y="12.200" text-anchor="middle" class="tq">?</text></svg>Help</a>
    </div>
  </section>
</main>

<footer class="status"><span>Ready</span><svg class="i16"><use href="#s-server"/></svg></footer>

<svg class="callout-lines" viewBox="0 0 1920 1080"><g fill="none" stroke="#00a79a" stroke-width="3"><path d="M150.500 313V789H533"/><path d="M1798.500 313V743.500H1526"/></g><g fill="#00a79a"><circle cx="533.500" cy="789" r="6"/><circle cx="1525.500" cy="743.500" r="6"/></g></svg>
<p class="callout one">1. Click on your website. It has<br>the same name as specified in<br>the Virtual Directory field in the<br>setup.</p>
<p class="callout two">2. Click on “Browse *:443 (https)”</p>
</body>
</html>
```
FILE: styles.css
```css
* { box-sizing: border-box; }
body {
  margin: 0; width: 1920px; height: 1080px; overflow: hidden; position: relative;
  background: #fff; color: #000;
  font: 11.5px/18px "Open Sans", "Noto Sans", sans-serif; letter-spacing: -0.1px;
  white-space: nowrap;
}
h1, h2, h3, p, ul { margin: 0; padding: 0; font-weight: normal; }
.sprite { position: absolute; }
.i16 { width: 16px; height: 16px; flex: none; display: block; }
.i32 { width: 32px; height: 32px; flex: none; display: block; }
.down { border: 3.5px solid transparent; border-top: 4px solid #111; border-bottom: 0; width: 0; height: 0; flex: none; }
.down.pale { border-top-color: #8d8d8d; }
.sep { width: 1px; height: 15px; background: #c5c2ae; flex: none; }
.t404 { font: 600 8px "DejaVu Sans", sans-serif; letter-spacing: 0; fill: #333; }
.tstr { font: bold 11px "Liberation Serif", serif; letter-spacing: 0; fill: #a31420; }
.tcgi { font: bold 9.5px "DejaVu Sans Mono", monospace; letter-spacing: .4px; fill: #fff; }
.tdav { font: 7.5px "DejaVu Sans", sans-serif; letter-spacing: 0; fill: #111; }
.tq { font: bold 12px "Liberation Sans", sans-serif; letter-spacing: 0; fill: #fff; }

.titlebar { height: 43px; padding: 20px 19px 0 2px; display: flex; align-items: center; position: relative; }
.title { margin-left: 5px; }
.handle { position: absolute; left: 840px; top: 20px; width: 241px; height: 1px; background: #e4e4e4; }
.handle i { display: block; width: 48px; height: 2px; margin: -1px 0 0 96px; background: #5ba2e2; }
.winbtns { width: 102px; height: 12px; margin: -3px 0 0 auto; }

.navbar { height: 33px; background: #b9d1ec; border-bottom: 1px solid #a5b5ca; display: flex; align-items: flex-start; padding: 1px 8px 0 3px; }
.backfwd { width: 56px; height: 28px; flex: none; }
.address { margin: 3px 0 0 19px; width: 1726px; height: 23px; background: #eaf1fb; border: 1px solid #9cb0cd; display: flex; align-items: center; padding: 0 0 1px 5px; flex: none; }
.tri { border: 4px solid transparent; border-left: 4px solid #111; border-right: 0; flex: none; }
.address .i16 { margin-right: 8px; }
.address span { margin: 0 11px; }
.navtools { display: flex; align-items: center; gap: 7px; margin: 4px 0 0 7px; }
.navsep { width: 2px; height: 13px; background: #edf4fc; margin-left: 1px; margin-right: -4px; }
.navtools .down { margin-left: -1px; }

.menubar { height: 25px; padding: 3px 0 0 15px; display: flex; background: linear-gradient(#fcfcfc, #e4e2e3); }
.menubar span + span { margin-left: 19.5px; }
.workspace { height: 937px; background: #f7f7f7; display: flex; padding-left: 1px; border-bottom: 1px solid #fff; }
h2 { height: 24px; font-weight: 700; font-size: 11.5px; line-height: 24px; padding-left: 7px; background: #bab8bb; letter-spacing: -0.3px; }
.connections { width: 304px; height: 935px; border: 1px solid #909090; background: #fff; flex: none; }
.conntools { height: 24px; display: flex; align-items: center; padding-left: 2px; gap: 9px; background: linear-gradient(#fbfbfb, #e4e2e3); border-bottom: 1px solid #3c3c6b; }
.tree { list-style: none; }
.tree li { height: 18px; display: flex; align-items: center; padding-left: 6px; }
.tree .l1 { padding-left: 25px; }
.tree .l2 { padding-left: 44px; }
.tree .l3 { padding-left: 63px; }
.tree .leaf { padding-left: 31px; }
.chev { width: 10px; height: 10px; flex: none; margin-right: 3px; }
.dots { width: 3px; margin-right: 1px; border-top: 1px dotted #777; flex: none; }
.tree .leaf .dots { width: 11px; height: 27px; margin: 0 0 0 0; border-top: 0; background: repeating-linear-gradient(#999 0 1px, transparent 1px 2px) 0 0 / 1px 27px no-repeat, repeating-linear-gradient(90deg, #999 0 1px, transparent 1px 2px) 0 13px / 11px 1px no-repeat; }
.tree span { margin-left: 4px; }
.selected { display: flex; align-items: center; height: 18px; background: #cce8ff; margin-left: -1px; padding: 0 4px 0 1px; }

.center { width: 1402px; margin-left: 6px; flex: none; }
.home { height: 908px; border: 1px solid #909090; background: #fff; padding: 0 12px; }
.hometitle { height: 51px; display: flex; align-items: center; padding-left: 2px; }
h1 { font-size: 18.3px; line-height: 24px; margin: -2px 0 0 16px; letter-spacing: -0.2px; }
.hometitle .i32 { margin-top: 3px; }
.features { height: 843px; border: 1px solid #dcdcdc; }
.toolbar { height: 29px; display: flex; align-items: center; background: linear-gradient(#fbfbfb, #e4e2e3); border-bottom: 1px solid #3c3c6b; padding-left: 7px; }
.w-filter { width: 34px; }
.box { height: 23px; background: #fff; display: flex; align-items: center; justify-content: flex-end; padding-right: 4px; flex: none; }
.filterbox { width: 121px; }
.funnel { margin-left: 3px; }
.go { color: #808080; width: 25px; margin-left: 3px; }
.showicon { margin-left: 4px; }
.showall { margin-left: 3px; width: 56px; }
.groupby { margin-left: 5px; width: 56px; }
.areabox { width: 115px; justify-content: space-between; padding: 0 4px 0 4px; }
.views { margin: 0 1px 0 3px; }
.group h3 { height: 19px; font-size: 11.5px; line-height: 19px; color: #1e3287; letter-spacing: 0; display: flex; align-items: center; padding: 0 9px 0 12px; }
.group h3 i { flex: 1; height: 1px; background: #aab9dc; margin: 0 8px 0 4px; }
.fold { width: 8px; height: 6px; }
.items { display: grid; grid-template-columns: repeat(18, 75px); grid-auto-rows: 75px; padding: 3px 0 2px; margin-left: -1px; }
.items > div { text-align: center; line-height: 15px; }
.items .i32 { margin: 1px auto 3px; }
.tabs { display: flex; padding: 3px 0 0 6px; }
.tab { height: 20px; display: flex; align-items: center; padding: 0 1px; }
.tab.active { border: 1px solid #0078d7; background: #fff; width: 99px; }
.tabs span { margin-left: 3px; }
.tab.active + .tab span { margin-left: 4px; }

.actions { width: 200px; height: 935px; margin-left: 6px; border: 1px solid #909090; background: linear-gradient(90deg, #fdfdfd, #e9e9e9); flex: none; }
.actlist { padding-top: 4px; }
.actlist a { height: 20px; display: flex; align-items: center; gap: 8px; padding-left: 5px; color: #3f94d3; }
.actlist a.strong { color: #000; font-weight: 700; letter-spacing: -0.25px; }
.actlist hr { margin: 1px 3px 3px 2px; height: 1px; border: 0; background: linear-gradient(90deg, #e8e8e8, #808080 25%); }
.actlist hr.short { margin-bottom: 2px; }
.manage { height: 24px; margin: 0 3px 2px 0; padding: 1px 9px 0 7px; display: flex; justify-content: space-between; align-items: center; font-weight: 700; letter-spacing: -0.3px; background: linear-gradient(#e0dfe0, #fafafa); }
.manage svg { width: 16px; height: 16px; margin-top: -1px; }

.status { height: 22px; display: flex; align-items: center; justify-content: space-between; padding: 0 12px 0 5px; background: linear-gradient(90deg, #e3e1e2, #fdfdfd); }

.callout-lines { position: absolute; left: 0; top: 0; width: 1920px; height: 1080px; pointer-events: none; }
.callout { position: absolute; font: 27.9px/30.3px "Liberation Sans", Arial, sans-serif; letter-spacing: 0; color: #00a79a; }
.one { left: 547px; top: 727px; }
.two { left: 1100px; top: 727px; }
```
